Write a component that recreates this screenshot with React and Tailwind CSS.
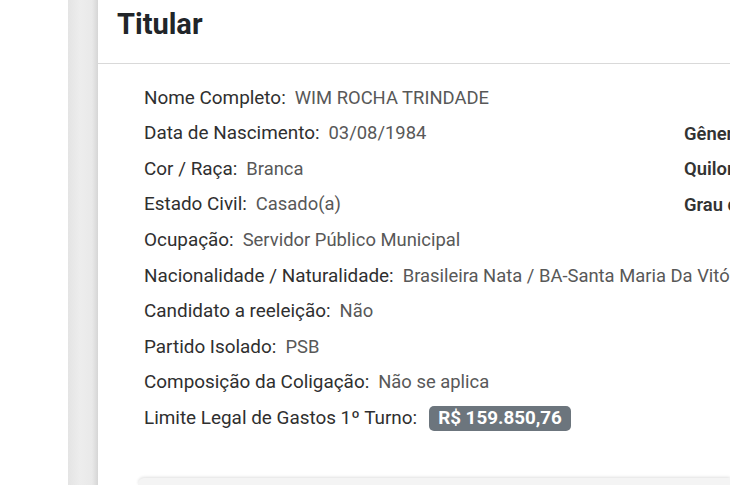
import React from 'react';

const rows = [
    { label: 'Nome Completo:', value: 'WIM ROCHA TRINDADE' },
    { label: 'Data de Nascimento:', value: '03/08/1984', side: 'Gênero:', sideValue: 'Masculino' },
    { label: 'Cor / Raça:', value: 'Branca', side: 'Quilombola:', sideValue: 'Não' },
    { label: 'Estado Civil:', value: 'Casado(a)', side: 'Grau de Instrução:', sideValue: 'Superior completo' },
    { label: 'Ocupação:', value: 'Servidor Público Municipal' },
    { label: 'Nacionalidade / Naturalidade:', value: 'Brasileira Nata / BA-Santa Maria Da Vitória' },
    { label: 'Candidato a reeleição:', value: 'Não' },
    { label: 'Partido Isolado:', value: 'PSB' },
    { label: 'Composição da Coligação:', value: 'Não se aplica' },
];

function Field({ label, value }) {
    return (
        <span className="whitespace-nowrap">
            <span className="text-[18.9px] text-[#2f2f2f]">{label}</span>
            <span className="ml-[9px] text-[18.4px] text-[#585858]">{value}</span>
        </span>
    );
}

export default function App() {
    return (
        <div
            className="flex h-[485px] w-[730px] overflow-hidden bg-white"
            style={{ fontFamily: 'Roboto, "Liberation Sans", sans-serif' }}
        >
            <div className="w-[68px] shrink-0" />
            <div className="w-[30px] shrink-0 bg-[linear-gradient(to_right,#e4e4e4,#ededed_40%,#e9e9e9_80%,#d6d6d6)]" />

            <div className="flex min-w-0 flex-1 flex-col">
                {/* Header */}
                <div className="h-[64px] shrink-0 border-b border-[#d9d9d9] pl-[19px] pt-[1px]">
                    <h1 className="text-[29px] font-bold leading-[46px] text-[#212529]">
                        Titular
                    </h1>
                </div>

                {/* Body */}
                <div className="flex flex-col pl-[46px] pt-[16px] text-[18.4px]">
                    {rows.map((row) => (
                        <div key={row.label} className="flex h-[35.6px] items-center">
                            <div className="w-[540px] shrink-0">
                                <Field label={row.label} value={row.value} />
                            </div>
                            {row.side && (
                                <span className="whitespace-nowrap font-semibold text-[#333]">
                                    {row.side}
                                </span>
                            )}
                        </div>
                    ))}
                    <div className="flex h-[35.6px] items-center whitespace-nowrap">
                        <span className="text-[18.9px] text-[#2f2f2f]">
                            Limite Legal de Gastos 1º Turno:
                        </span>
                        <span className="ml-[12px] rounded-[5px] bg-[#6c757d] px-[9px] py-[1px] text-[18.8px] font-bold leading-[23px] text-white">
                            R$ 159.850,76
                        </span>
                    </div>
                </div>

                {/* Next card */}
                <div className="ml-[40px] mt-[42px] h-[40px] rounded-tl-[6px] bg-[#f4f4f4] shadow-[0_-1px_3px_rgba(0,0,0,0.12)]" />
            </div>
        </div>
    );
}
